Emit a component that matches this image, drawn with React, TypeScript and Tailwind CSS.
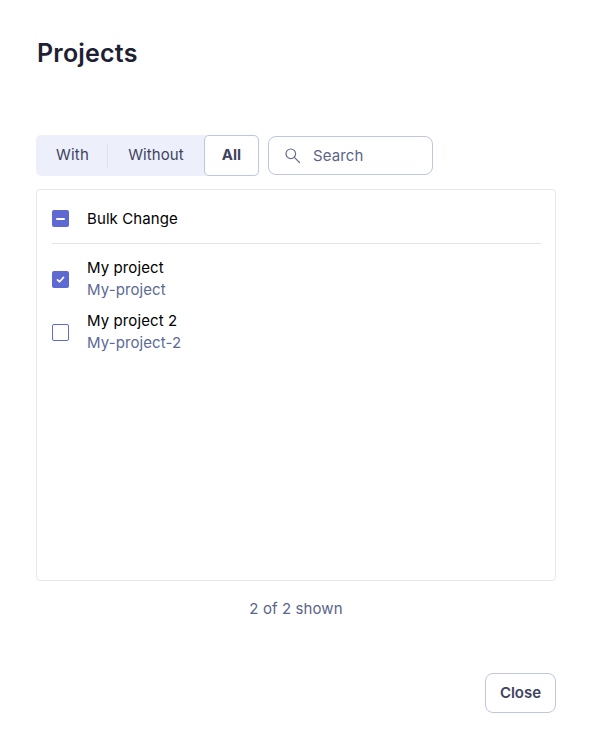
const App = () => {
  return (
    <div className="w-[592px] h-[745px] bg-white px-9 font-['Inter',sans-serif] text-[15px]">
      <h1 className="pt-[37px] pl-[1px] h-[135px] text-[25px] leading-[32px] tracking-[0.2px] font-semibold text-[#1d2133]">Projects</h1>

      <div className="flex items-center h-[41px]">
        <div className="flex items-center h-[41px] rounded-[5px] bg-[#edf0fa] text-[#3e4361]">
          <button className="h-[24px] w-[72px] border-r border-[#dfe3f0] pl-[2px] text-center tracking-[0.2px]">With</button>
          <button className="w-[96px] text-center tracking-[0.1px]">Without</button>
          <button className="h-[41px] w-[55px] rounded-[5px] border border-[#bfc6e0] bg-white font-bold text-[#3e4361]">All</button>
        </div>
        <div className="ml-[9px] flex h-[39px] w-[165px] items-center rounded-[8px] border border-[#bfc6e0] pl-[15px]">
          <svg width="17" height="17" viewBox="0 0 17 17" fill="none" stroke="#646d93" strokeWidth="1.2" strokeLinecap="round">
            <circle cx="6.8" cy="6.8" r="4.8" />
            <path d="M10.4 10.4L15.5 15.5" />
          </svg>
          <span className="ml-[12px] pt-[1px] tracking-[0.1px] text-[#5b6489]">Search</span>
        </div>
      </div>

      <div className="mt-[13px] h-[392px] rounded-[4px] border border-[#e6e7ec] pl-[15px] pr-[14px]">
        <div className="flex h-[54px] items-center border-b border-[#e3e4ea] pt-[4px]">
          <span className="flex h-[17px] w-[17px] items-center justify-center rounded-[2px] bg-[#5e6ad2]">
            <span className="h-[2px] w-[9px] rounded-[1px] bg-white" />
          </span>
          <span className="ml-[18px] pt-[2px] tracking-[0.1px] text-black">Bulk Change</span>
        </div>

        <div className="mt-[13px] flex h-[44px] items-center">
          <span className="flex h-[17px] w-[17px] items-center justify-center rounded-[2px] bg-[#5e6ad2]">
            <svg width="9" height="9" viewBox="0 0 9 9" fill="none" stroke="white" strokeWidth="1.6" strokeLinecap="round" strokeLinejoin="round">
              <path d="M1.5 4.8L3.6 6.8L7.5 2.4" />
            </svg>
          </span>
          <div className="ml-[18px]">
            <div className="leading-[22px] tracking-[0.1px] text-black">My project</div>
            <div className="leading-[22px] tracking-[0.1px] text-[#5b6a96]">My-project</div>
          </div>
        </div>

        <div className="mt-[9px] flex h-[44px] items-center">
          <span className="h-[17px] w-[17px] rounded-[2px] border border-[#5e6ad2] bg-white" />
          <div className="ml-[18px]">
            <div className="leading-[22px] tracking-[0.1px] text-black">My project 2</div>
            <div className="leading-[22px] tracking-[0.1px] text-[#5b6a96]">My-project-2</div>
          </div>
        </div>
      </div>

      <div className="mt-[18px] text-center leading-[20px] tracking-[0.1px] text-[#5b6489]">2 of 2 shown</div>

      <div className="mt-[54px] flex justify-end">
        <button className="h-[40px] w-[71px] rounded-[8px] border border-[#bfc6e0] bg-white font-semibold text-[#3e4361]">Close</button>
      </div>
    </div>
  );
};

export default App;
